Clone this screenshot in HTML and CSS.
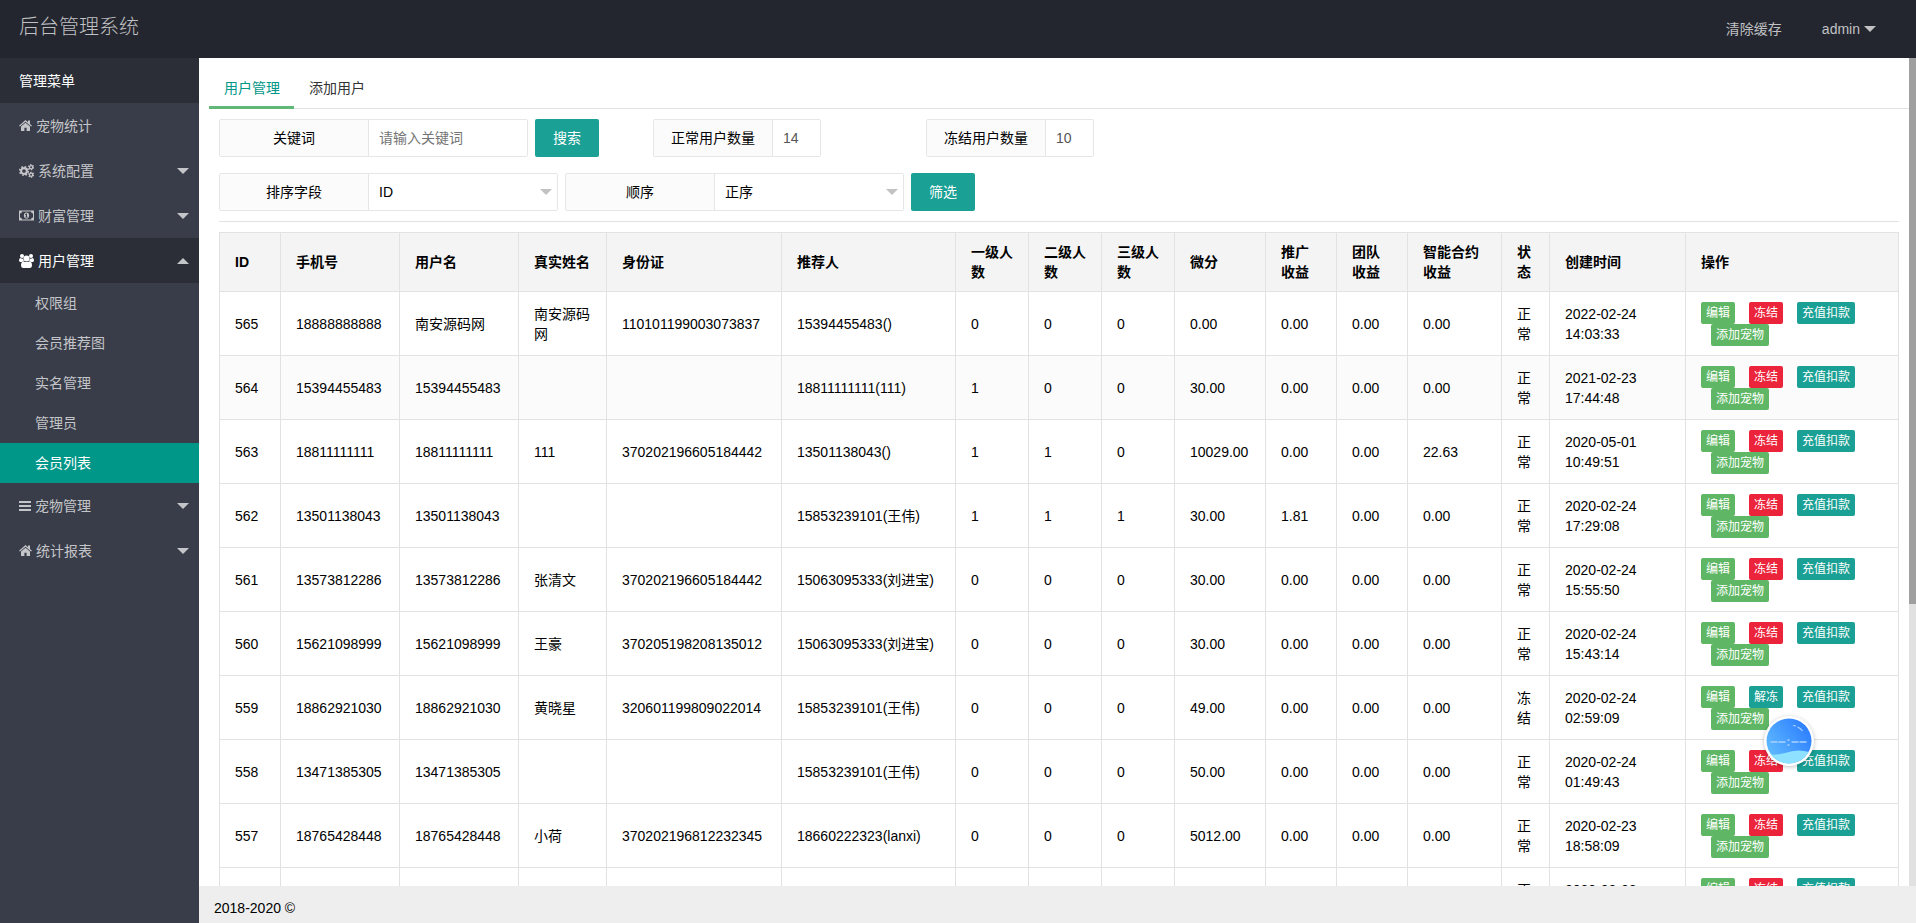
FILE: index.html
```html
<!DOCTYPE html>
<html lang="zh-CN">
<head>
<meta charset="utf-8">
<title>后台管理系统</title>
<link rel="stylesheet" href="styles.css">
</head>
<body>
<svg class="sprite" aria-hidden="true">
  <symbol id="home" viewBox="0 0 13 13">
    <path d="M6.5 1 L0 6.7 L0.9 7.6 L6.5 2.8 L12.1 7.6 L13 6.7 L11 5 V1.4 H9 V3.2 Z M6.5 3.7 L2 7.5 V12 H5.4 V8.8 H7.6 V12 H11 V7.5 Z"/>
  </symbol>
  <symbol id="cogs" viewBox="0 0 15 14">
    <g fill="none" stroke="currentColor">
      <circle cx="5" cy="7" r="2.9" stroke-width="2.1"/>
      <circle cx="5" cy="7" r="4.3" stroke-width="1.6" stroke-dasharray="1.8 1.577"/>
      <circle cx="12.100" cy="3.200" r="1.600" stroke-width="1.3"/>
      <circle cx="12.100" cy="3.200" r="2.500" stroke-width="1.200" stroke-dasharray="1.4 1.218"/>
      <circle cx="12.100" cy="10.800" r="1.600" stroke-width="1.3"/>
      <circle cx="12.100" cy="10.800" r="2.500" stroke-width="1.200" stroke-dasharray="1.4 1.218"/>
    </g>
  </symbol>
  <symbol id="money" viewBox="0 0 15 11">
    <path fill-rule="evenodd" d="M0 0.5 H15 V10.5 H0 Z M3 1.5 A2 2 0 0 1 1 3.5 V7.5 A2 2 0 0 1 3 9.5 H12 A2 2 0 0 1 14 7.5 V3.5 A2 2 0 0 1 12 1.5 Z"/>
    <path fill-rule="evenodd" d="M7.5 2.4 A2.6 3.1 0 0 1 7.5 8.6 A2.6 3.1 0 0 1 7.5 2.4 Z M6.2 4.2 V5 H7 V6.8 H6.2 V7.5 H8.8 V6.8 H8 V3.5 H7.3 Z"/>
  </symbol>
  <symbol id="users" viewBox="0 0 15 14">
    <circle cx="3" cy="2" r="2"/>
    <circle cx="12" cy="2" r="2"/>
    <circle cx="7.500" cy="4.500" r="3"/>
    <path d="M0 6.600 Q0 4 1.400 4 Q2.900 5 4.200 4.400 Q4.200 6 5 7 Q3.600 7 3 8 H1.200 Q0 8 0 6.600 Z M15 6.600 Q15 4 13.600 4 Q12.100 5 10.800 4.400 Q10.800 6 10 7 Q11.400 7 12 8 H13.800 Q15 8 15 6.600 Z"/>
    <path d="M2 11.600 Q2 7.400 4.500 7.200 Q7.500 9 10.500 7.200 Q13 7.400 13 11.600 Q13 14 11 14 H4 Q2 14 2 11.600 Z"/>
  </symbol>
  <symbol id="bars" viewBox="0 0 12 12">
    <path d="M0 1 H12 V3 H0 Z M0 5 H12 V7 H0 Z M0 9 H12 V11 H0 Z"/>
  </symbol>
</svg>

<header class="header">
  <div class="logo">后台管理系统</div>
  <nav class="header-nav">
    <a href="#">清除缓存</a>
    <a href="#">admin<span class="caret"></span></a>
  </nav>
</header>

<div class="shell">
  <aside class="side">
    <nav class="menu">
      <a class="menu-item title" href="#">管理菜单</a>
      <a class="menu-item" href="#"><svg width="13" height="13"><use href="#home"/></svg>宠物统计</a>
      <a class="menu-item" href="#"><svg width="15" height="14"><use href="#cogs"/></svg>系统配置<span class="caret"></span></a>
      <a class="menu-item" href="#"><svg width="15" height="11"><use href="#money"/></svg>财富管理<span class="caret"></span></a>
      <a class="menu-item open" href="#"><svg width="15" height="14"><use href="#users"/></svg>用户管理<span class="caret up"></span></a>
      <div class="submenu">
        <a href="#">权限组</a>
        <a href="#">会员推荐图</a>
        <a href="#">实名管理</a>
        <a href="#">管理员</a>
        <a class="current" href="#">会员列表</a>
      </div>
      <a class="menu-item" href="#"><svg width="12" height="12"><use href="#bars"/></svg>宠物管理<span class="caret"></span></a>
      <a class="menu-item" href="#"><svg width="13" height="13"><use href="#home"/></svg>统计报表<span class="caret"></span></a>
    </nav>
  </aside>

  <div class="content">
    <div class="view">
      <main class="page">
        <div class="tabs">
          <a class="tab active" href="#">用户管理</a>
          <a class="tab" href="#">添加用户</a>
        </div>
        <div class="panel">
          <form class="filters">
            <div class="field">
              <label for="keyword">关键词</label>
              <input class="wide" id="keyword" type="text" placeholder="请输入关键词">
            </div>
            <button class="btn" type="button">搜索</button>
            <div class="field count first">
              <label for="normal">正常用户数量</label>
              <input id="normal" type="text" value="14" readonly>
            </div>
            <div class="field count">
              <label for="frozen">冻结用户数量</label>
              <input id="frozen" type="text" value="10" readonly>
            </div>
          </form>
          <form class="filters">
            <div class="field">
              <label for="sort">排序字段</label>
              <div class="select"><select id="sort"><option>ID</option></select><span class="caret"></span></div>
            </div>
            <div class="field">
              <label for="order">顺序</label>
              <div class="select"><select id="order"><option>正序</option></select><span class="caret"></span></div>
            </div>
            <button class="btn" type="button">筛选</button>
          </form>
          <hr class="rule">
          <table class="table">
            <colgroup>
              <col class="c-id"><col class="c-phone"><col class="c-phone"><col class="c-real"><col class="c-card"><col class="c-ref"><col class="c-level"><col class="c-level"><col class="c-level"><col class="c-score"><col class="c-income"><col class="c-income"><col class="c-contract"><col class="c-state"><col class="c-time"><col>
            </colgroup>
            <thead>
              <tr><th>ID</th><th>手机号</th><th>用户名</th><th>真实姓名</th><th>身份证</th><th>推荐人</th><th>一级人数</th><th>二级人数</th><th>三级人数</th><th>微分</th><th>推广收益</th><th>团队收益</th><th>智能合约收益</th><th>状态</th><th>创建时间</th><th>操作</th></tr>
            </thead>
            <tbody id="rows"></tbody>
          </table>
        </div>
      </main>
      <div class="scroll-track"><div class="scroll-thumb"></div></div>
    </div>
    <footer class="footer">2018-2020 ©</footer>
  </div>
</div>

<svg class="ball" viewBox="0 0 56 56" aria-hidden="true">
  <defs>
    <linearGradient id="sky" x1="0" y1="0.8" x2="0.9" y2="0.2"><stop offset="0" stop-color="#62bdff"/><stop offset="1" stop-color="#2f80ff"/></linearGradient>
    <clipPath id="disc"><circle cx="28" cy="28" r="22.5"/></clipPath>
  </defs>
  <circle cx="28" cy="28" r="25" fill="#fff"/>
  <circle cx="28" cy="28" r="22.5" fill="url(#sky)"/>
  <path d="M5 41 Q14 43 24 40 Q38 35 51 40 V52 H5 Z" fill="#8ee2ff" clip-path="url(#disc)"/>
  <path d="M9.500 29 H16.500 M17.500 29 H24.500 M30.500 29 H37.500 M38.500 29 H45.500" stroke="#a9d2ff" stroke-width="1.600"/>
  <path d="M26.500 27 h2 M26.500 32 h2" stroke="#a9d2ff" stroke-width="1.600"/>
  <path d="M32 12.500 L35 13 M36.500 14 Q40 15.500 41.500 18" stroke="#a9d2ff" stroke-width="1.200" fill="none"/>
</svg>
<script src="app.js"></script>
</body>
</html>
```
FILE: styles.css
```css
* { box-sizing: border-box; }

body {
  margin: 0;
  height: 100vh;
  display: flex;
  flex-direction: column;
  overflow: hidden;
  font: 14px/20px "Liberation Sans", "Noto Sans CJK SC", sans-serif;
  color: #000;
  background: #fff;
}

a { color: inherit; text-decoration: none; }
input, select, button { font: inherit; margin: 0; }
.sprite { display: none; }

.caret {
  border: 6px solid transparent;
  border-top-color: currentColor;
  border-bottom-width: 0;
}
.caret.up {
  border-bottom: 6px solid currentColor;
  border-top-width: 0;
}

.header {
  flex: none;
  height: 58px;
  display: flex;
  justify-content: space-between;
  background: #23262e;
  color: #c1c1c4;
}
.logo { padding-left: 19px; font-size: 20px; font-weight: 300; line-height: 54px; }
.header-nav { display: flex; padding-right: 20px; line-height: 56px; }
.header-nav a { display: flex; align-items: center; gap: 4px; padding: 0 20px; }

.shell { flex: 1; min-height: 0; display: flex; }

.side { flex: none; width: 199px; background: #393d49; color: #c4c5c8; }
.menu-item {
  display: flex;
  align-items: center;
  gap: 4px;
  height: 45px;
  padding: 0 10px 0 19px;
  line-height: 18px;
}
.menu-item svg { fill: currentColor; }
.menu-item .caret { margin-left: auto; color: #c4c5c8; }
.menu-item.title, .menu-item.open { background: #2b2e37; color: #fff; }
.submenu a { display: block; padding-left: 35px; line-height: 40px; }
.submenu .current { background: #009688; color: #fff; }

.content { flex: 1; min-width: 0; display: flex; flex-direction: column; }
.view { flex: 1; min-height: 0; display: flex; }
.page { flex: 1; min-width: 0; overflow: hidden; padding: 10px 0 0 10px; }
.scroll-track { flex: none; width: 7px; background: #e1e1e1; }
.scroll-thumb { height: 66%; background: #9f9f9f; }
.footer {
  flex: none;
  height: 37px;
  padding-left: 15px;
  line-height: 44px;
  background: #eee;
  overflow: hidden;
}

.tabs { display: flex; border-bottom: 1px solid #e2e2e2; line-height: 40px; }
.tab { padding: 0 14px 0 15px; margin-bottom: -1px; color: #333; border-bottom: 3px solid transparent; height: 41px; }
.tab.active { color: #009688; border-bottom-color: #5fb878; }

.panel { padding: 10px 10px 0; }
.filters { display: flex; gap: 7px; margin-bottom: 16px; }
.field { display: flex; height: 38px; border: 1px solid #e6e6e6; border-radius: 2px; }
.field label {
  width: 149px;
  line-height: 36px;
  text-align: center;
  background: #fbfbfb;
  border-right: 1px solid #e6e6e6;
}
.field input { width: 47px; padding: 0 10px; border: 0; background: #fff; color: #555; }
.field .wide { width: 158px; }
.field input::placeholder { color: #757575; }
.count { margin-left: 98px; }
.count.first { margin-left: 47px; }
.count label { width: 119px; }
.select { position: relative; width: 188px; }
.select select { width: 100%; height: 36px; padding: 0 10px; border: 0; background: #fff; color: #000; appearance: none; }
.select .caret { position: absolute; right: 5px; top: 15px; color: #c2c2c2; pointer-events: none; }
.btn { width: 64px; height: 38px; padding: 0; border: 0; border-radius: 2px; background: #1aa094; color: #fff; }

.rule { margin: -6px 0 10px; border: 0; border-top: 1px solid #e2e2e2; }

.table { width: 100%; table-layout: fixed; border-collapse: collapse; }
.table th, .table td { border: 1px solid #e2e2e2; padding: 9px 15px; text-align: left; }
.table th { height: 59px; background: #f4f4f4; }
.table td { height: 64px; }
.table .highlight { background: #fbfbfb; }
.table .ops { padding-right: 0; line-height: 22px; }
.c-id { width: 61px; }
.c-phone { width: 119px; }
.c-real { width: 88px; }
.c-card { width: 175px; }
.c-ref { width: 174px; }
.c-level { width: 73px; }
.c-score { width: 91px; }
.c-income { width: 71px; }
.c-contract { width: 94px; }
.c-state { width: 48px; }
.c-time { width: 136px; }

.ops div { display: flex; gap: 14px; }
.ops div + div { padding-left: 10px; }
.mini { height: 22px; padding: 0 5px; font-size: 12px; line-height: 22px; border-radius: 2px; color: #fff; background: #1aa094; }
.mini.green { background: #5fb765; }
.mini.red { background: #eb243b; }

.ball {
  position: fixed;
  right: 99px;
  bottom: 154px;
  width: 56px;
  height: 56px;
  filter: drop-shadow(0 1px 2px rgba(0, 0, 0, 0.25));
}
```
FILE: app.js
```js
const rows = [
  ["565", "18888888888", "南安源码网", "南安源码网", "110101199003073837", "15394455483()", "0", "0", "0", "0.00", "0.00", "0.00", "0.00", "正常", "2022-02-24 14:03:33"],
  ["564", "15394455483", "15394455483", "", "", "18811111111(111)", "1", "0", "0", "30.00", "0.00", "0.00", "0.00", "正常", "2021-02-23 17:44:48"],
  ["563", "18811111111", "18811111111", "111", "370202196605184442", "13501138043()", "1", "1", "0", "10029.00", "0.00", "0.00", "22.63", "正常", "2020-05-01 10:49:51"],
  ["562", "13501138043", "13501138043", "", "", "15853239101(王伟)", "1", "1", "1", "30.00", "1.81", "0.00", "0.00", "正常", "2020-02-24 17:29:08"],
  ["561", "13573812286", "13573812286", "张清文", "370202196605184442", "15063095333(刘进宝)", "0", "0", "0", "30.00", "0.00", "0.00", "0.00", "正常", "2020-02-24 15:55:50"],
  ["560", "15621098999", "15621098999", "王豪", "370205198208135012", "15063095333(刘进宝)", "0", "0", "0", "30.00", "0.00", "0.00", "0.00", "正常", "2020-02-24 15:43:14"],
  ["559", "18862921030", "18862921030", "黄晓星", "320601199809022014", "15853239101(王伟)", "0", "0", "0", "49.00", "0.00", "0.00", "0.00", "冻结", "2020-02-24 02:59:09"],
  ["558", "13471385305", "13471385305", "", "", "15853239101(王伟)", "0", "0", "0", "50.00", "0.00", "0.00", "0.00", "正常", "2020-02-24 01:49:43"],
  ["557", "18765428448", "18765428448", "小荷", "370202196812232345", "18660222323(lanxi)", "0", "0", "0", "5012.00", "0.00", "0.00", "0.00", "正常", "2020-02-23 18:58:09"],
  ["", "", "", "", "", "", "", "", "", "", "", "", "", "正常", "2020-02-22 12:00:00"]
];

document.getElementById("rows").innerHTML = rows.map(row => {
  const toggle = row[13] === "冻结"
    ? '<a class="mini" href="#">解冻</a>'
    : '<a class="mini red" href="#">冻结</a>';
  const open = row[0] === "564" ? '<tr class="highlight">' : "<tr>";
  return open + row.map(cell => `<td>${cell}</td>`).join("") +
    `<td class="ops"><div><a class="mini green" href="#">编辑</a>${toggle}<a class="mini" href="#">充值扣款</a></div>` +
    '<div><a class="mini green" href="#">添加宠物</a></div></td></tr>';
}).join("");
```
